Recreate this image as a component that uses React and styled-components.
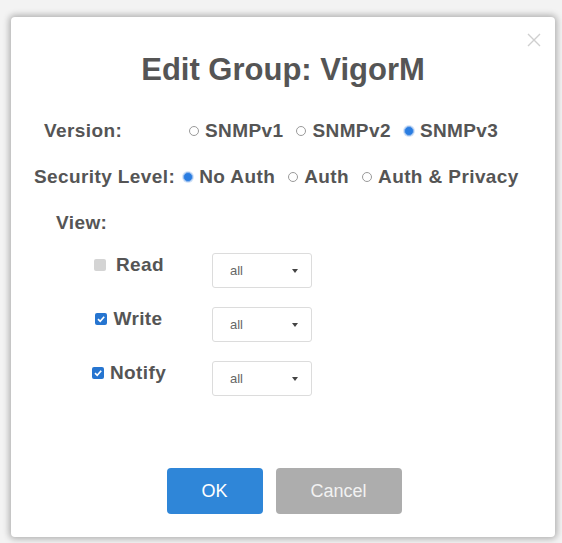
import React from "react";
import styled, { createGlobalStyle } from "styled-components";

const Global = createGlobalStyle`
  html, body { margin: 0; padding: 0; }
  body {
    background: #f3f3f3;
    font-family: "Liberation Sans", Arial, sans-serif;
    color: #555;
  }
`;

const Page = styled.div`
  width: 562px;
  height: 543px;
  padding: 17px 0 0 11px;
  box-sizing: border-box;
`;

const Dialog = styled.div`
  position: relative;
  width: 544px;
  height: 520px;
  box-sizing: border-box;
  background: #fff;
  border-radius: 4px;
  box-shadow: 0 0 6px 2px rgba(0, 0, 0, 0.28);
  padding-top: 36px;
  display: flex;
  flex-direction: column;
`;

const Close = styled.button`
  position: absolute;
  top: 15px;
  right: 13px;
  width: 16px;
  height: 16px;
  padding: 0;
  border: none;
  background: none;
  cursor: pointer;
`;

const Title = styled.h2`
  margin: 0;
  text-align: center;
  font-size: 31px;
  line-height: 34px;
  font-weight: bold;
  color: #555;
`;

const Form = styled.div`
  margin-top: 21px;
  display: flex;
  flex-direction: column;
`;

const Row = styled.div`
  display: flex;
  align-items: center;
  height: 46px;
  padding-left: ${(p) => p.$indent}px;
  font-size: 19px;
  letter-spacing: 0.4px;
  font-weight: bold;
`;

const Label = styled.span`
  width: ${(p) => (p.$width ? `${p.$width}px` : "auto")};
  margin-right: ${(p) => p.$gap || 0}px;
  white-space: nowrap;
`;

const Option = styled.label`
  display: inline-flex;
  align-items: center;
  margin-right: 13px;
  white-space: nowrap;
`;

const RadioMark = styled.span`
  width: 10px;
  height: 10px;
  border-radius: 50%;
  box-sizing: border-box;
  margin-right: 6px;
  border: 1px solid ${(p) => (p.$on ? "#8fb8ee" : "#9a9a9a")};
  background: ${(p) => (p.$on ? "#2a7de1" : "#fff")};
  box-shadow: ${(p) => (p.$on ? "0 0 0 1px #d6e5f8" : "none")};
`;

const ViewList = styled.div`
  margin-top: 7px;
  display: flex;
  flex-direction: column;
  gap: 19px;
`;

const ViewRow = styled.div`
  display: flex;
  align-items: flex-start;
  padding-left: 35px;
`;

const CheckCell = styled.label`
  width: 166px;
  display: flex;
  justify-content: center;
  align-items: center;
  height: 24px;
  font-size: 19px;
  letter-spacing: 0.4px;
  font-weight: bold;
`;

const CheckBox = styled.span`
  width: 12px;
  height: 12px;
  border-radius: 2px;
  margin-right: ${(p) => (p.$disabled ? 10 : 6)}px;
  background: ${(p) => (p.$disabled ? "#d4d4d4" : "#2675d0")};
  display: flex;
  align-items: center;
  justify-content: center;
`;

const Select = styled.div`
  width: 100px;
  height: 35px;
  box-sizing: border-box;
  border: 1px solid #dcdcdc;
  border-radius: 3px;
  display: flex;
  align-items: center;
  justify-content: space-between;
  padding: 0 13px 0 17px;
  font-size: 13px;
  color: #666;
`;

const Caret = styled.span`
  width: 0;
  height: 0;
  border-left: 3.5px solid transparent;
  border-right: 3.5px solid transparent;
  border-top: 4px solid #444;
`;

const Buttons = styled.div`
  margin-top: auto;
  margin-bottom: 23px;
  display: flex;
  justify-content: center;
  gap: 13px;
  padding-left: 2px;
`;

const Button = styled.button`
  width: ${(p) => p.$width}px;
  height: 46px;
  border: none;
  border-radius: 4px;
  background: ${(p) => (p.$primary ? "#2f86d8" : "#adadad")};
  color: ${(p) => (p.$primary ? "#fff" : "#f2f2f2")};
  font-family: "Liberation Sans", Arial, sans-serif;
  font-size: 18px;
  cursor: pointer;
`;

const Check = () => (
  <svg width="10" height="10" viewBox="0 0 10 10">
    <path d="M2 5.2 L4.2 7.3 L8.2 2.8" fill="none" stroke="#fff" strokeWidth="1.7" />
  </svg>
);

const Radio = ({ on, children }) => (
  <Option>
    <RadioMark $on={on} />
    {children}
  </Option>
);

const views = [
  { name: "Read", disabled: true },
  { name: "Write" },
  { name: "Notify" },
];

export default function App() {
  return (
    <Page>
      <Global />
      <Dialog>
        <Close aria-label="close">
          <svg width="16" height="16" viewBox="0 0 16 16">
            <path d="M2 2 L14 14 M14 2 L2 14" stroke="#cfcfcf" strokeWidth="1.4" />
          </svg>
        </Close>
        <Title>Edit Group: VigorM</Title>
        <Form>
          <Row $indent={33}>
            <Label $width={145}>Version:</Label>
            <Radio>SNMPv1</Radio>
            <Radio>SNMPv2</Radio>
            <Radio on>SNMPv3</Radio>
          </Row>
          <Row $indent={23}>
            <Label $gap={8}>Security Level:</Label>
            <Radio on>No Auth</Radio>
            <Radio>Auth</Radio>
            <Radio>Auth &amp; Privacy</Radio>
          </Row>
          <Row $indent={45}>
            <Label>View:</Label>
          </Row>
          <ViewList>
            {views.map((v) => (
              <ViewRow key={v.name}>
                <CheckCell>
                  <CheckBox $disabled={v.disabled}>
                    {!v.disabled && <Check />}
                  </CheckBox>
                  {v.name}
                </CheckCell>
                <Select>
                  all
                  <Caret />
                </Select>
              </ViewRow>
            ))}
          </ViewList>
        </Form>
        <Buttons>
          <Button $primary $width={96}>OK</Button>
          <Button $width={126}>Cancel</Button>
        </Buttons>
      </Dialog>
    </Page>
  );
}
